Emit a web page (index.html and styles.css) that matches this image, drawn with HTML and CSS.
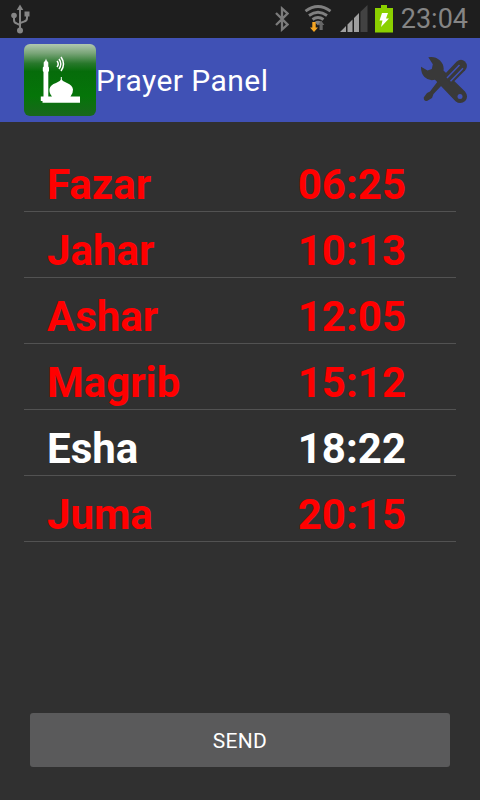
FILE: index.html
```html
<!DOCTYPE html>
<html lang="en">
<head>
<meta charset="utf-8">
<title>Prayer Panel</title>
<link rel="stylesheet" href="styles.css">
</head>
<body>
<div class="status">
  <svg class="usb" width="20" height="30" viewBox="0 0 20 30" fill="#858585" stroke="#858585">
    <path d="M10 5V26M4 12v4q0 3 3 3.600L10 21M17 10v4q0 3-3 3.600L10 19" fill="none" stroke-width="2"/>
    <path d="M10 .5l3.300 5.500H6.700z" stroke="none"/><circle cx="10" cy="26.600" r="3" stroke="none"/><circle cx="4" cy="11.500" r="2.800" stroke="none"/><path d="M14.500 7.500h5v5h-5z" stroke="none"/>
  </svg>
  <svg class="bt" width="14" height="26" viewBox="0 0 14 26" fill="none" stroke="#7b7b7b" stroke-width="2.300"><path d="M1 7l11.500 11.500-5.500 5V2.500l5.500 5L1 19"/></svg>
  <svg class="wifi" width="28" height="30" viewBox="0 0 28 30">
    <g fill="none" stroke="#808080" stroke-width="2.800"><path d="M1.500 7.200q12.500-9.500 25 0M5 11.500q9-6.500 18 0M8.500 15.500q5.500-4 11 0"/></g>
    <path d="M10.500 18q3.500-2.500 7 0L14 21.500z" fill="#808080"/>
    <path d="M8.300 18h3.400v5.500h2.300L10 28l-4-4.500h2.300z" fill="#f5a623"/>
    <path d="M15.500 26v-5h-1.700l3.300-4.500 3.200 4.500h-1.600v5z" fill="#666"/>
  </svg>
  <svg class="signal" width="28" height="28" viewBox="0 0 28 28"><path d="M0 27l6-6v6zM7.500 19.500l5-5V27h-5zM14 13l5-5v19h-5z" fill="#a0a0a0"/><path d="M20.500 6.800L27.500 0v27h-7z" fill="#424242"/></svg>
  <svg class="battery" width="18" height="28" viewBox="0 0 18 28"><path d="M6 0h6v3h6v24.500H0V3h6z" fill="#8bd000"/><path d="M7 8h6l-2 5.500h3L6 22l1.500-6.500H4.500z" fill="#fff"/></svg>
  <span class="clock">23:04</span>
</div>
<header class="bar">
  <svg class="logo" width="72" height="72" viewBox="0 0 72 72">
    <defs><linearGradient id="g" x1="0" y1="0" x2="0" y2="1"><stop offset="0" stop-color="#b2c8b0"/><stop offset=".13" stop-color="#78a477"/><stop offset=".27" stop-color="#28782b"/><stop offset=".38" stop-color="#066c0a"/><stop offset=".72" stop-color="#057509"/><stop offset="1" stop-color="#19671c"/></linearGradient></defs>
    <rect width="72" height="72" rx="6" fill="url(#g)"/>
    <g fill="#fff">
      <path d="M22 14.500l.7 2 1.600 2v4l.7 1v3.500l-.7 1V53h-4.800V28l-.7-1v-3.500l.9-1v-4l1.600-2z"/>
      <path d="M18.500 52.500H28q-3-3.500-2.500-7.500.8-4.200 6.500-6 4-1.500 5.300-3.800Q38.600 37.500 43 39q5.500 2.300 6 6.500.2 3.700-2.500 7H56v6.300H18.500V57H16.800v-4.500z"/>
    </g>
    <g fill="none" stroke="#fff" stroke-width="1.500"><path d="M33 17q2.500 3 0 6M35 15q3.600 5 0 10M37 13q5 7 0 14"/></g>
    <path d="M37.300 33v3" stroke="#fff"/>
  </svg>
  <h1 class="title">Prayer Panel</h1>
  <svg class="tools" width="48" height="48" viewBox="0 0 48 48">
    <path d="M8.300 1.300Q15 0 20 4.500q4.500 4.500 3.500 10L45 35.500q4 5 .2 9.500-4.800 4-9.700.2L15 23.800Q9 25.500 4.500 21 .8 17 1 10.800l6.500 3.700 4.300-1.500 1-4.800z" fill="#393939"/>
    <circle cx="40" cy="40.500" r="2.500" fill="#4051b5"/>
    <path d="M24 19L36.500 5.800q4.500-3.800 8.500-.2 3.800 4.200.2 8.600L31 28.500z" fill="#393939"/>
    <path d="M27 22L39.500 9M30.500 25.300L43 12.300" stroke="#4051b5" stroke-width="1.500"/>
    <path d="M18 25l4 4-8.500 9-1.500 4-5 3q-2 .5-3-1.500l-.3-2L7 37l3-1.500z" fill="#393939"/>
  </svg>
</header>
<main class="list">
  <div class="row"><span>Fazar</span><span>06:25</span></div>
  <div class="row"><span>Jahar</span><span>10:13</span></div>
  <div class="row"><span>Ashar</span><span>12:05</span></div>
  <div class="row"><span>Magrib</span><span>15:12</span></div>
  <div class="row current"><span>Esha</span><span>18:22</span></div>
  <div class="row"><span>Juma</span><span>20:15</span></div>
</main>
<button class="send">SEND</button>
</body>
</html>
```
FILE: styles.css
```css
* { box-sizing: border-box; }
body {
  margin: 0;
  width: 480px;
  height: 800px;
  overflow: hidden;
  display: flex;
  flex-direction: column;
  background: #303030;
  color: #fff;
  font-family: Roboto, "Liberation Sans", sans-serif;
}
svg { display: block; flex: none; }
.status {
  height: 38px;
  flex: none;
  display: flex;
  align-items: center;
  padding: 0 12px 0 10px;
  background: #1e1e1e;
}
.bt { margin-left: auto; }
.wifi { margin-left: 15px; }
.signal { margin-left: 8px; }
.battery { margin-left: 7px; }
.clock {
  margin-left: 8px;
  color: #858585;
  font-size: 27px;
  line-height: 38px;
}
.bar {
  height: 84px;
  flex: none;
  display: flex;
  align-items: center;
  padding: 0 12px 0 24px;
  background: #4051b5;
}
.title {
  margin: 0;
  font-size: 30px;
  font-weight: 400;
  letter-spacing: 0.45px;
}
.tools { margin-left: auto; }
.list { padding: 24px 24px 0; }
.row {
  height: 66px;
  display: flex;
  justify-content: space-between;
  padding: 13px 50px 0 23px;
  border-bottom: 1px solid #525252;
  color: #f00;
  font-size: 42px;
  font-weight: 700;
  line-height: 52px;
}
.current { color: #fff; }
.send {
  margin: auto 30px 33px;
  height: 54px;
  border: 0;
  border-radius: 3px;
  padding: 2px 0 0;
  background: #5a5a5b;
  color: #fff;
  font: 400 21px Roboto, "Liberation Sans", sans-serif;
  letter-spacing: 0.3px;
}
```
